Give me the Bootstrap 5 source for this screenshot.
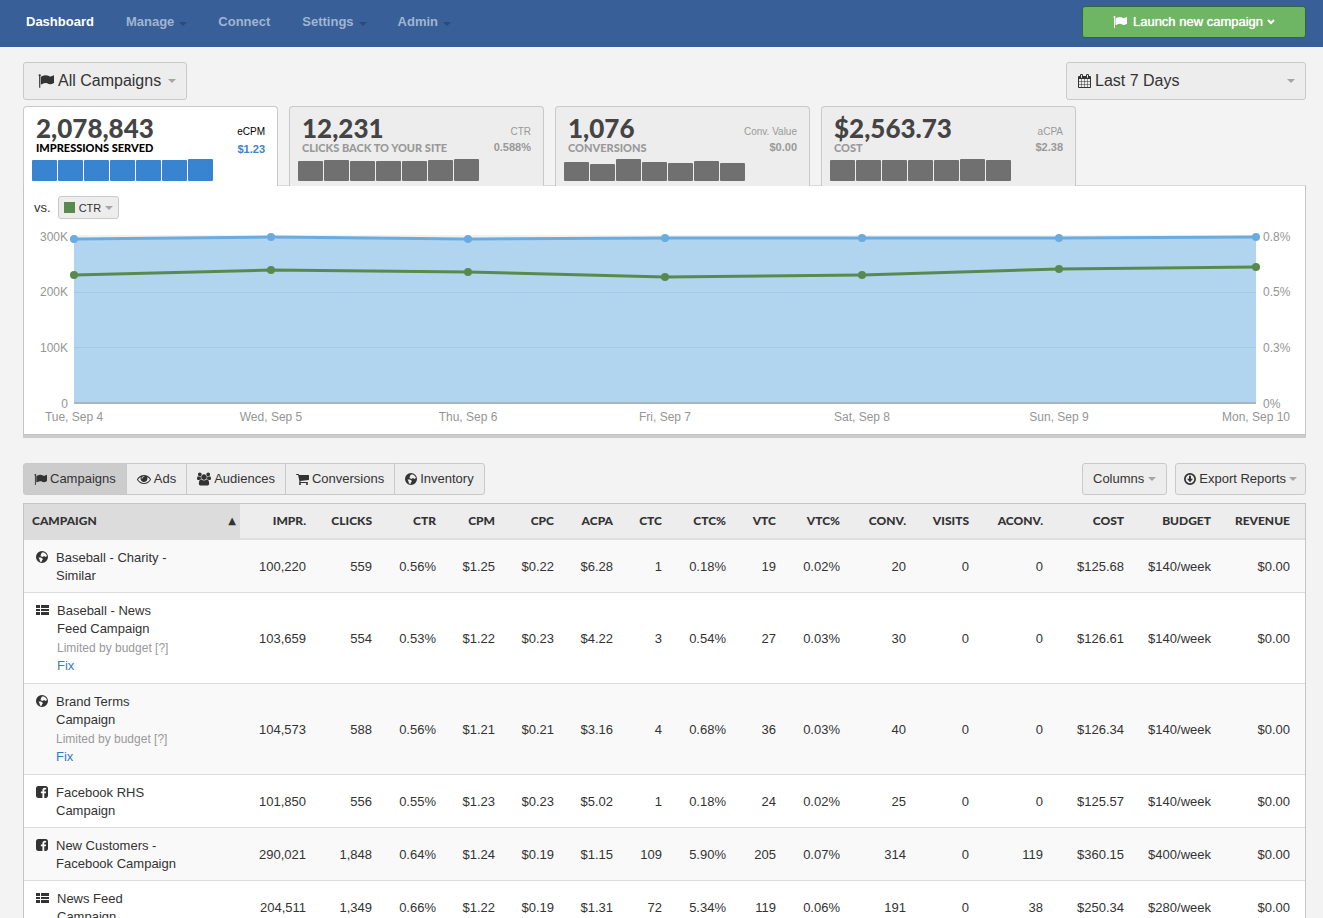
<!DOCTYPE html>
<html lang="en">
<head>
<meta charset="utf-8">
<meta name="viewport" content="width=device-width, initial-scale=1">
<title>Dashboard</title>
<link href="https://cdn.jsdelivr.net/npm/bootstrap@5.3.0/dist/css/bootstrap.min.css" rel="stylesheet">
<style>
body{background:#f3f3f3;color:#333;font-family:"Liberation Sans",Arial,sans-serif;font-size:13px;line-height:18px}
.page{padding:0 17px 0 23px}
.ico{width:13px;height:13px;fill:currentColor;flex:none}
.topbar{background:#385f97;height:47px;padding:0 17px 4px 26px}
.topbar .main-links .nav-link{padding:0;font-weight:700;color:#a0b5d3}
.topbar .main-links .nav-link.active{color:#fff}
.dropdown-toggle::after{border-top:4px solid #a5a5a5;border-left:4px solid transparent;border-right:4px solid transparent;margin-left:4px;vertical-align:2px}
.topbar .dropdown-toggle::after{border-top-color:#294a7b;margin:0 -1px 0 5px;vertical-align:0}
.main-links{column-gap:32px}
.btn{--bs-btn-font-size:13px;--bs-btn-line-height:18px;--bs-btn-padding-x:10px;--bs-btn-padding-y:6px;--bs-btn-border-radius:3px}
.btn-soft{--bs-btn-bg:#ededed;--bs-btn-border-color:#c9c9c9;--bs-btn-color:#333;--bs-btn-hover-bg:#e3e3e3;--bs-btn-hover-border-color:#bbb;--bs-btn-active-bg:#ccc;--bs-btn-active-border-color:#c9c9c9;--bs-btn-active-color:#333}
.btn-launch{--bs-btn-bg:#6eb663;--bs-btn-border-color:#37633f;--bs-btn-color:#fff;--bs-btn-hover-bg:#62a957;--bs-btn-hover-color:#fff;min-width:224px;height:32px;text-shadow:0 0 1px #fff}
.btn-launch .ico{width:14px;height:14px;margin-right:6px}
.btn-big{--bs-btn-font-size:16px;--bs-btn-line-height:24px;height:38px;padding-left:14px}
.btn-big::after{margin-left:7px}
.btn-big .ico{width:16px;height:16px}
.btn-range{min-width:240px;padding-left:11px}
.btn-range .ico{width:13px;height:14px}
.btn-mini{--bs-btn-font-size:11px;--bs-btn-padding-x:5px;--bs-btn-padding-y:2px;height:23px}
.btn-export{--bs-btn-padding-x:8px}
.btn-export .ico{width:12px;height:12px}
.btn-export::after{margin-left:3px}
.swatch{width:11px;height:11px;background:#588a50}
.filters{padding-top:15px;margin-bottom:6px}
.metrics{display:grid;grid-template-columns:repeat(4,minmax(0,255px));column-gap:11px;position:relative;z-index:1;margin-bottom:-1px}
.metric{background:#ededed;border:1px solid #c9c9c9;border-bottom:0;border-radius:4px 4px 0 0;padding:10px 12px 5px 8px;color:#999}
.metric.active{background:#fff;color:#000}
.metric-num{font:900 26px/22px Lato,sans-serif;color:#444}
.metric-name{font:900 11px/18px Lato,sans-serif}
.metric-side{font-size:10px;line-height:16px;padding-top:7px;text-align:right}
.metric-side strong{display:block;font-size:11px;line-height:14px}
.metric.active strong{color:#3a83cf;line-height:18px}
.spark{height:22px;gap:1px;margin-top:4px}
.metric-top{height:38px}
.spark i{width:25px;background:#707070;border-radius:1px}
.metric.active .spark i{background:#3984d0}
.panel{background:#fff;border:1px solid #c4c4c4;border-top-color:#d9d9d9;box-shadow:0 3px 0 #cbcbcb;padding:10px 49px 4px 50px;margin-bottom:28px}
.versus{margin-left:-40px;gap:7px}
.chart{display:block;width:100%;height:200px;margin-top:11px;overflow:visible;font-size:12px;fill:#959595}
.view-tabs .ico,.tool-btns .ico{margin-right:3px}
.view-tabs .btn{display:flex;align-items:center}
.view-tabs .ico-wide{width:14px;height:14px}
.view-tabs .ico-globe{width:12px;height:12px}
.grid-wrap{border:1px solid #c4c4c4;margin-top:8px}
.grid{table-layout:fixed;width:100%;margin:0;--bs-table-bg:transparent}
.grid th{font:900 12px/18px Lato,sans-serif;text-transform:uppercase;background:#ededed;color:#333;padding:8px 15px 8px 0;border-bottom:2px solid #dcdcdc;text-align:right;white-space:nowrap}
.grid th.sorted{background:#dcdcdc;padding:8px 4px 8px 8px}
.sort-mark{font:10px/18px "DejaVu Sans",sans-serif}
.grid td{padding:9px 15px 7px 0;text-align:right;vertical-align:middle;border-bottom:1px solid #dcdcdc;color:#333;white-space:nowrap}
.grid tbody tr{background:#fff}
.grid tbody tr:nth-child(odd){background:#f9f9f9}
.grid td:first-child{padding-left:12px;text-align:left;white-space:normal}
.camp{width:145px;gap:8px}
.camp .ico{width:12px;height:12px;margin-top:2px}
.camp .ico-list{width:13px}
.limited{color:#999;font-size:12px;margin-top:1px}
.fix{display:table;color:#3a7ac4;text-decoration:none;margin-bottom:1px}
</style>
</head>
<body>
<svg class="d-none" aria-hidden="true">
<symbol id="flag" viewBox="0 0 1792 1792"><path d="M320 256q0 72-64 110v1266q0 13-9.500 22.500t-22.500 9.500h-64q-13 0-22.500-9.500t-9.500-22.500v-1266q-64-38-64-110 0-53 37.500-90.500t90.500-37.500 90.500 37.500 37.500 90.500zM1792 320v763q0 25-12.500 38.500t-39.500 27.500q-215 116-369 116-61 0-123.500-22t-108.500-48-115.500-48-142.500-22q-192 0-464 146-17 9-33 9-26 0-45-19t-19-45v-742q0-32 31-55 21-14 79-43 236-120 421-120 107 0 200 29t219 88q38 19 88 19 54 0 117.500-21t110-47 88-47 54.500-21q26 0 45 19t19 45z"/></symbol>
<symbol id="calendar" viewBox="64 0 1664 1792"><path d="M192 1664h288v-288h-288v288zm352 0h320v-288h-320v288zm-352-352h288v-320h-288v320zm352 0h320v-320h-320v320zm-352-384h288v-288h-288v288zm736 736h320v-288h-320v288zm-384-736h320v-288h-320v288zm768 736h288v-288h-288v288zm-384-352h320v-320h-320v320zm-352-864v-288q0-13-9.500-22.500t-22.500-9.500h-64q-13 0-22.500 9.500t-9.500 22.500v288q0 13 9.500 22.500t22.500 9.500h64q13 0 22.500-9.500t9.500-22.500zm736 864h288v-320h-288v320zm-384-384h320v-288h-320v288zm384 0h288v-288h-288v288zm32-480v-288q0-13-9.500-22.500t-22.500-9.500h-64q-13 0-22.500 9.500t-9.500 22.500v288q0 13 9.500 22.500t22.500 9.500h64q13 0 22.500-9.500t9.500-22.500zm384-64v1280q0 52-38 90t-90 38h-1408q-52 0-90-38t-38-90v-1280q0-52 38-90t90-38h128v-96q0-66 47-113t113-47h64q66 0 113 47t47 113v96h384v-96q0-66 47-113t113-47h64q66 0 113 47t47 113v96h128q52 0 90 38t38 90z"/></symbol>
<symbol id="eye" viewBox="0 0 1792 1792"><path d="M1664 960q-152-236-381-353 61 104 61 225 0 185-131.500 316.500t-316.500 131.500-316.500-131.500-131.500-316.500q0-121 61-225-229 117-381 353 133 205 333.500 326.500t434.500 121.500 434.500-121.500 333.500-326.500zm-720-384q0-20-14-34t-34-14q-125 0-214.500 89.500t-89.500 214.500q0 20 14 34t34 14 34-14 14-34q0-86 61-147t147-61q20 0 34-14t14-34zm848 384q0 34-20 69-140 230-376.500 368.500t-499.500 138.500-499.500-139-376.500-368q-20-35-20-69t20-69q140-229 376.500-368t499.500-139 499.500 139 376.500 368q20 35 20 69z"/></symbol>
<symbol id="group" viewBox="0 0 1920 1792"><path d="M593 896q-162 5-265 128h-134q-82 0-138-40.500t-56-118.500q0-353 124-353 6 0 43.500 21t97.500 42.500 119 21.500q67 0 133-23-5 37-5 66 0 139 81 256zm1071 637q0 120-73 189.500t-194 69.500h-874q-121 0-194-69.500t-73-189.500q0-53 3.500-103.500t14-109 26.500-108.500 43-97.500 62-81 85.500-53.500 111.500-20q10 0 43 21.500t73 48 107 48 135 21.500 135-21.500 107-48 73-48 43-21.500q61 0 111.500 20t85.500 53.500 62 81 43 97.500 26.500 108.500 14 109 3.500 103.500zm-1024-1277q0 106-75 181t-181 75-181-75-75-181 75-181 181-75 181 75 75 181zm704 384q0 159-112.500 271.500t-271.500 112.500-271.500-112.500-112.500-271.500 112.500-271.500 271.500-112.500 271.500 112.500 112.500 271.500zm576 225q0 78-56 118.500t-138 40.500h-134q-103-123-265-128 81-117 81-256 0-29-5-66 66 23 133 23 59 0 119-21.500t97.500-42.500 43.500-21q124 0 124 353zm-128-609q0 106-75 181t-181 75-181-75-75-181 75-181 181-75 181 75 75 181z"/></symbol>
<symbol id="cart" viewBox="64 128 1664 1664"><path d="M704 1536q0 52-38 90t-90 38-90-38-38-90 38-90 90-38 90 38 38 90zm896 0q0 52-38 90t-90 38-90-38-38-90 38-90 90-38 90 38 38 90zm128-1088v512q0 24-16.500 42.500t-40.500 21.500l-1044 122q13 60 13 70 0 16-24 64h920q26 0 45 19t19 45-19 45-45 19h-1024q-26 0-45-19t-19-45q0-11 8-31.500t16-36 21.500-40 15.500-29.500l-177-823h-204q-26 0-45-19t-19-45 19-45 45-19h256q16 0 28.500 6.500t19.500 15.500 13 24.500 8 26 5.500 29.500 4.500 26h1201q26 0 45 19t19 45z"/></symbol>
<symbol id="globe" viewBox="0 0 24 24"><path fill-rule="evenodd" d="M12 0a12 12 0 1 0 0 24a12 12 0 0 0 0-24zM12 3l4 0 4 3 2 4-3 2-3-2-3 2-4-2 1-4zM5 13l5 0 4 3-2 3-1 3-3-1-1-4z"/></symbol>
<symbol id="thlist" viewBox="0 0 13 12"><path d="M0 1h4v3H0zM5 1h8v3H5zM0 5h4v2H0zM5 5h8v2H5zM0 8h4v3H0zM5 8h8v3H5z"/></symbol>
<symbol id="facebook" viewBox="128 128 1536 1536"><path d="M1376 128q119 0 203.500 84.500t84.500 203.500v960q0 119-84.500 203.500t-203.500 84.500h-188v-595h199l30-232h-229v-148q0-56 23.500-84t91.500-28l122-1v-207q-63-9-178-9-136 0-217.500 80t-81.500 226v171h-200v232h200v595h-532q-119 0-203.500-84.500t-84.500-203.500v-960q0-119 84.500-203.500t203.500-84.500h960z"/></symbol>
<symbol id="download" viewBox="0 0 24 24"><path fill-rule="evenodd" d="M12 0a12 12 0 1 0 0 24a12 12 0 0 0 0-24zM12 3.500a8.500 8.500 0 1 1 0 17a8.500 8.500 0 0 1 0-17z"/><path d="M10 5.500h4v6h4l-6 7-6-7h4z"/></symbol>
</svg>

<nav class="topbar navbar navbar-expand flex-nowrap justify-content-between">
  <ul class="navbar-nav main-links">
    <li class="nav-item"><a class="nav-link active" href="#">Dashboard</a></li>
    <li class="nav-item"><a class="nav-link dropdown-toggle" href="#">Manage</a></li>
    <li class="nav-item"><a class="nav-link" href="#">Connect</a></li>
    <li class="nav-item"><a class="nav-link dropdown-toggle" href="#">Settings</a></li>
    <li class="nav-item"><a class="nav-link dropdown-toggle" href="#">Admin</a></li>
  </ul>
  <button type="button" class="btn btn-launch d-flex align-items-center justify-content-center"><svg class="ico"><use href="#flag"/></svg>Launch new campaign<svg class="ms-1" width="8" height="6" viewBox="0 0 8 6"><path d="M1 1l3 3 3-3" fill="none" stroke="#fff" stroke-width="2"/></svg></button>
</nav>

<main class="page">
  <div class="filters d-flex justify-content-between">
    <button type="button" class="btn btn-soft btn-big dropdown-toggle d-flex align-items-center"><svg class="ico me-1"><use href="#flag"/></svg>All Campaigns</button>
    <button type="button" class="btn btn-soft btn-big btn-range dropdown-toggle d-flex align-items-center"><svg class="ico me-1"><use href="#calendar"/></svg><span class="flex-grow-1 text-start">Last 7 Days</span></button>
  </div>

  <div class="metrics">
    <section class="metric active">
      <div class="metric-top d-flex justify-content-between"><div class="ms-1"><div class="metric-num">2,078,843</div><div class="metric-name">IMPRESSIONS SERVED</div></div><div class="metric-side">eCPM<strong>$1.23</strong></div></div>
      <div class="spark d-flex align-items-end"><i style="height:21px"></i><i style="height:21px"></i><i style="height:21px"></i><i style="height:21px"></i><i style="height:21px"></i><i style="height:21px"></i><i style="height:22px"></i></div>
    </section>
    <section class="metric">
      <div class="metric-top d-flex justify-content-between"><div class="ms-1"><div class="metric-num">12,231</div><div class="metric-name">CLICKS BACK TO YOUR SITE</div></div><div class="metric-side">CTR<strong>0.588%</strong></div></div>
      <div class="spark d-flex align-items-end"><i style="height:20px"></i><i style="height:21px"></i><i style="height:20px"></i><i style="height:20px"></i><i style="height:20px"></i><i style="height:21px"></i><i style="height:22px"></i></div>
    </section>
    <section class="metric">
      <div class="metric-top d-flex justify-content-between"><div class="ms-1"><div class="metric-num">1,076</div><div class="metric-name">CONVERSIONS</div></div><div class="metric-side">Conv. Value<strong>$0.00</strong></div></div>
      <div class="spark d-flex align-items-end"><i style="height:19px"></i><i style="height:17px"></i><i style="height:22px"></i><i style="height:19px"></i><i style="height:18px"></i><i style="height:20px"></i><i style="height:18px"></i></div>
    </section>
    <section class="metric">
      <div class="metric-top d-flex justify-content-between"><div class="ms-1"><div class="metric-num">$2,563.73</div><div class="metric-name">COST</div></div><div class="metric-side">aCPA<strong>$2.38</strong></div></div>
      <div class="spark d-flex align-items-end"><i style="height:21px"></i><i style="height:21px"></i><i style="height:21px"></i><i style="height:21px"></i><i style="height:21px"></i><i style="height:22px"></i><i style="height:21px"></i></div>
    </section>
  </div>

  <section class="panel">
    <div class="versus d-flex align-items-center"><span>vs.</span><button type="button" class="btn btn-soft btn-mini dropdown-toggle d-flex align-items-center"><span class="swatch me-1"></span>CTR</button></div>
    <svg class="chart" role="img" aria-label="Impressions and CTR by day">
      <line x1="0" x2="100%" y1="6" y2="6" stroke="#e4e4e4"/>
      <svg x="0" y="0" width="100%" height="200" viewBox="0 0 600 200" preserveAspectRatio="none">
        <path d="M0 9L100 7L200 9L300 8L400 8L500 8L600 7V174H0z" fill="#b1d5ef"/>
      </svg>
      <g stroke="#a5c9e3" stroke-width="1" shape-rendering="crispEdges"><line x1="0" x2="100%" y1="62" y2="62"/><line x1="0" x2="100%" y1="117" y2="117"/></g>
      <line x1="0" x2="100%" y1="173" y2="173" stroke="#a9b4bd" stroke-width="2" shape-rendering="crispEdges"/>
      <svg x="0" y="0" width="100%" height="200" viewBox="0 0 600 200" preserveAspectRatio="none" fill="none" stroke-width="3">
        <path d="M0 9L100 7L200 9L300 8L400 8L500 8L600 7" stroke="#6aace0" vector-effect="non-scaling-stroke"/>
        <path d="M0 45L100 40L200 42L300 47L400 45L500 39L600 37" stroke="#588a50" vector-effect="non-scaling-stroke"/>
      </svg>
      <g fill="#6aace0"><circle cx="0" cy="9" r="4"/><circle cx="16.667%" cy="7" r="4"/><circle cx="33.333%" cy="9" r="4"/><circle cx="50%" cy="8" r="4"/><circle cx="66.667%" cy="8" r="4"/><circle cx="83.333%" cy="8" r="4"/><circle cx="100%" cy="7" r="4"/></g>
      <g fill="#588a50"><circle cx="0" cy="45" r="4"/><circle cx="16.667%" cy="40" r="4"/><circle cx="33.333%" cy="42" r="4"/><circle cx="50%" cy="47" r="4"/><circle cx="66.667%" cy="45" r="4"/><circle cx="83.333%" cy="39" r="4"/><circle cx="100%" cy="37" r="4"/></g>
      <g text-anchor="end"><text x="-6" y="11">300K</text><text x="-6" y="66">200K</text><text x="-6" y="122">100K</text><text x="-6" y="178">0</text></g>
      <svg x="100%" overflow="visible"><text x="7" y="11">0.8%</text><text x="7" y="66">0.5%</text><text x="7" y="122">0.3%</text><text x="7" y="178">0%</text></svg>
      <g text-anchor="middle"><text x="0" y="191">Tue, Sep 4</text><text x="16.667%" y="191">Wed, Sep 5</text><text x="33.333%" y="191">Thu, Sep 6</text><text x="50%" y="191">Fri, Sep 7</text><text x="66.667%" y="191">Sat, Sep 8</text><text x="83.333%" y="191">Sun, Sep 9</text><text x="100%" y="191">Mon, Sep 10</text></g>
    </svg>
  </section>

  <div class="d-flex justify-content-between">
    <div class="btn-group view-tabs">
      <button type="button" class="btn btn-soft active"><svg class="ico"><use href="#flag"/></svg>Campaigns</button>
      <button type="button" class="btn btn-soft"><svg class="ico ico-wide"><use href="#eye"/></svg>Ads</button>
      <button type="button" class="btn btn-soft"><svg class="ico ico-wide"><use href="#group"/></svg>Audiences</button>
      <button type="button" class="btn btn-soft"><svg class="ico"><use href="#cart"/></svg>Conversions</button>
      <button type="button" class="btn btn-soft"><svg class="ico ico-globe"><use href="#globe"/></svg>Inventory</button>
    </div>
    <div class="tool-btns d-flex gap-2">
      <button type="button" class="btn btn-soft dropdown-toggle">Columns</button>
      <button type="button" class="btn btn-soft btn-export dropdown-toggle d-flex align-items-center"><svg class="ico"><use href="#download"/></svg>Export Reports</button>
    </div>
  </div>

  <div class="grid-wrap">
  <table class="table grid">
    <colgroup><col style="width:216px"><col style="width:81px"><col style="width:66px"><col style="width:64px"><col style="width:59px"><col style="width:59px"><col style="width:59px"><col style="width:49px"><col style="width:64px"><col style="width:50px"><col style="width:64px"><col style="width:66px"><col style="width:63px"><col style="width:74px"><col style="width:81px"><col style="width:87px"><col style="width:79px"></colgroup>
    <thead><tr><th class="sorted" scope="col"><div class="d-flex justify-content-between"><span>Campaign</span><span class="sort-mark">▲</span></div></th><th scope="col">Impr.</th><th scope="col">Clicks</th><th scope="col">CTR</th><th scope="col">CPM</th><th scope="col">CPC</th><th scope="col">aCPA</th><th scope="col">CTC</th><th scope="col">CTC%</th><th scope="col">VTC</th><th scope="col">VTC%</th><th scope="col">Conv.</th><th scope="col">Visits</th><th scope="col">aConv.</th><th scope="col">Cost</th><th scope="col">Budget</th><th scope="col">Revenue</th></tr></thead>
    <tbody>
      <tr><td><div class="camp d-flex"><svg class="ico"><use href="#globe"/></svg><div>Baseball - Charity - Similar</div></div></td><td>100,220</td><td>559</td><td>0.56%</td><td>$1.25</td><td>$0.22</td><td>$6.28</td><td>1</td><td>0.18%</td><td>19</td><td>0.02%</td><td>20</td><td>0</td><td>0</td><td>$125.68</td><td>$140/week</td><td>$0.00</td></tr>
      <tr><td><div class="camp d-flex"><svg class="ico ico-list"><use href="#thlist"/></svg><div>Baseball - News Feed Campaign<div class="limited">Limited by budget [?]</div><a class="fix" href="#">Fix</a></div></div></td><td>103,659</td><td>554</td><td>0.53%</td><td>$1.22</td><td>$0.23</td><td>$4.22</td><td>3</td><td>0.54%</td><td>27</td><td>0.03%</td><td>30</td><td>0</td><td>0</td><td>$126.61</td><td>$140/week</td><td>$0.00</td></tr>
      <tr><td><div class="camp d-flex"><svg class="ico"><use href="#globe"/></svg><div>Brand Terms Campaign<div class="limited">Limited by budget [?]</div><a class="fix" href="#">Fix</a></div></div></td><td>104,573</td><td>588</td><td>0.56%</td><td>$1.21</td><td>$0.21</td><td>$3.16</td><td>4</td><td>0.68%</td><td>36</td><td>0.03%</td><td>40</td><td>0</td><td>0</td><td>$126.34</td><td>$140/week</td><td>$0.00</td></tr>
      <tr><td><div class="camp d-flex"><svg class="ico"><use href="#facebook"/></svg><div>Facebook RHS Campaign</div></div></td><td>101,850</td><td>556</td><td>0.55%</td><td>$1.23</td><td>$0.23</td><td>$5.02</td><td>1</td><td>0.18%</td><td>24</td><td>0.02%</td><td>25</td><td>0</td><td>0</td><td>$125.57</td><td>$140/week</td><td>$0.00</td></tr>
      <tr><td><div class="camp d-flex"><svg class="ico"><use href="#facebook"/></svg><div>New Customers - Facebook Campaign</div></div></td><td>290,021</td><td>1,848</td><td>0.64%</td><td>$1.24</td><td>$0.19</td><td>$1.15</td><td>109</td><td>5.90%</td><td>205</td><td>0.07%</td><td>314</td><td>0</td><td>119</td><td>$360.15</td><td>$400/week</td><td>$0.00</td></tr>
      <tr><td><div class="camp d-flex"><svg class="ico ico-list"><use href="#thlist"/></svg><div>News Feed Campaign</div></div></td><td>204,511</td><td>1,349</td><td>0.66%</td><td>$1.22</td><td>$0.19</td><td>$1.31</td><td>72</td><td>5.34%</td><td>119</td><td>0.06%</td><td>191</td><td>0</td><td>38</td><td>$250.34</td><td>$280/week</td><td>$0.00</td></tr>
    </tbody>
  </table>
  </div>
</main>
<script src="https://cdn.jsdelivr.net/npm/bootstrap@5.3.0/dist/js/bootstrap.bundle.min.js"></script>
</body>
</html>
